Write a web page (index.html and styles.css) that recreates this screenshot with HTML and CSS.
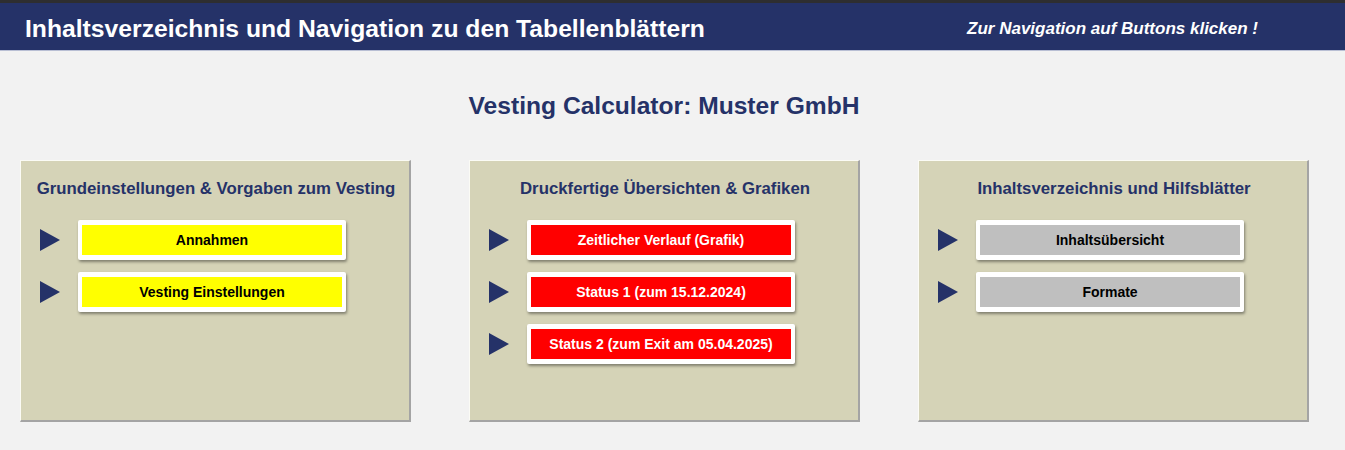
FILE: index.html
```html
<!DOCTYPE html>
<html lang="de">
<head>
<meta charset="utf-8">
<title>Inhaltsverzeichnis</title>
<link rel="stylesheet" href="styles.css">
</head>
<body>
<div class="topline"></div>
<header class="header">
  <h1 class="header-title">Inhaltsverzeichnis und Navigation zu den Tabellenblättern</h1>
  <div class="header-hint">Zur Navigation auf Buttons klicken !</div>
</header>
<h2 class="subtitle">Vesting Calculator: Muster GmbH</h2>
<main class="panels">
  <section class="panel">
    <h3 class="panel-title">Grundeinstellungen &amp; Vorgaben zum Vesting</h3>
    <div class="row"><span class="arrow"></span><a class="btn"><span class="btn-inner yellow">Annahmen</span></a></div>
    <div class="row"><span class="arrow"></span><a class="btn"><span class="btn-inner yellow">Vesting Einstellungen</span></a></div>
  </section>
  <section class="panel">
    <h3 class="panel-title">Druckfertige Übersichten &amp; Grafiken</h3>
    <div class="row"><span class="arrow"></span><a class="btn"><span class="btn-inner red">Zeitlicher Verlauf (Grafik)</span></a></div>
    <div class="row"><span class="arrow"></span><a class="btn"><span class="btn-inner red">Status 1 (zum 15.12.2024)</span></a></div>
    <div class="row"><span class="arrow"></span><a class="btn"><span class="btn-inner red">Status 2 (zum Exit am 05.04.2025)</span></a></div>
  </section>
  <section class="panel">
    <h3 class="panel-title">Inhaltsverzeichnis und Hilfsblätter</h3>
    <div class="row"><span class="arrow"></span><a class="btn"><span class="btn-inner grey">Inhaltsübersicht</span></a></div>
    <div class="row"><span class="arrow"></span><a class="btn"><span class="btn-inner grey">Formate</span></a></div>
  </section>
</main>
</body>
</html>
```
FILE: styles.css
```css
* { box-sizing: border-box; }
body {
  margin: 0;
  background: #f2f2f2;
  font-family: "Liberation Sans", Arial, sans-serif;
}
.topline {
  height: 3px;
  background: #2e2e30;
}
.header {
  height: 48px;
  background: #253268;
  border-bottom: 1px solid #b9bfd4;
  display: flex;
  align-items: center;
  justify-content: space-between;
  padding: 5px 87px 0 25px;
}
.header-title {
  margin: 0;
  color: #ffffff;
  font-size: 24.7px;
  font-weight: bold;
  line-height: 28px;
}
.header-hint {
  color: #ffffff;
  font-size: 17px;
  font-weight: bold;
  font-style: italic;
  line-height: 20px;
}
.subtitle {
  margin: 41px 0 0 0;
  text-align: center;
  color: #253268;
  font-size: 24.6px;
  font-weight: bold;
  line-height: 28px;
  padding-right: 17px;
}
.panels {
  display: flex;
  gap: 58px;
  padding-left: 20px;
  margin-top: 40px;
}
.panel {
  width: 391px;
  height: 262px;
  background: #d5d3b7;
  border-left: 1px solid #fbfbf5;
  border-top: 1px solid #fbfbf5;
  border-right: 2px solid #a4a4a4;
  border-bottom: 2px solid #a4a4a4;
  padding-top: 18px;
}
.panel-title {
  margin: 0 0 22px 0;
  text-align: center;
  color: #253268;
  font-size: 16.8px;
  font-weight: bold;
  line-height: 19px;
  padding-left: 2px;
}
.row {
  display: flex;
  align-items: center;
  height: 40px;
  margin-bottom: 12px;
  padding-left: 19px;
}
.arrow {
  width: 0;
  height: 0;
  border-top: 11px solid transparent;
  border-bottom: 11px solid transparent;
  border-left: 20px solid #253268;
  margin-right: 18px;
}
.btn {
  display: block;
  width: 268px;
  height: 40px;
  padding: 5px 4px;
  background: #ffffff;
  border-radius: 2px;
  box-shadow: 1px 2px 3px rgba(0, 0, 0, 0.4);
  cursor: pointer;
}
.btn-inner {
  display: flex;
  align-items: center;
  justify-content: center;
  height: 100%;
  font-size: 14px;
  font-weight: bold;
}
.yellow { background: #ffff00; color: #000000; }
.red { background: #ff0000; color: #ffffff; }
.grey { background: #bfbfbf; color: #000000; }
```
